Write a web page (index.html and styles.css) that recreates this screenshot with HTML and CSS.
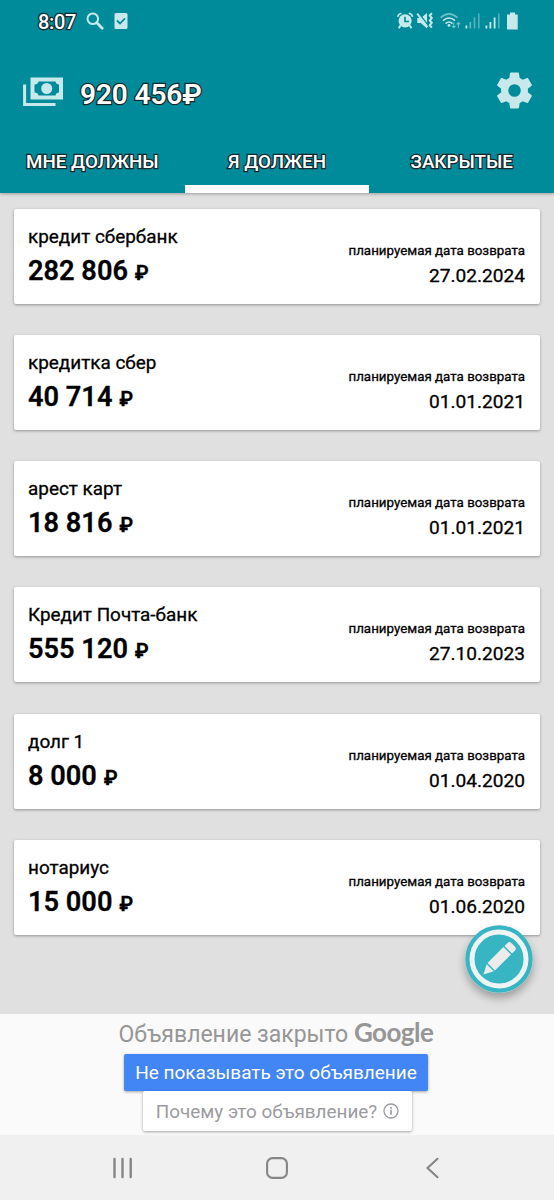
FILE: index.html
```html
<!DOCTYPE html>
<html lang="ru">

<head>
    <meta charset="UTF-8">
    <title>Долги</title>
    <link rel="stylesheet" href="styles.css">
</head>

<body>

    <header class="header">
        <!-- Строка состояния -->
        <div class="status-bar">
            <span class="clock outlined">8:07</span>
            <svg class="icon-search" width="18" height="18" viewBox="0 0 18 18">
                <circle cx="6.8" cy="6.8" r="5.3" fill="none" stroke="currentColor" stroke-width="2"/>
                <path d="M10.8 10.8L16.2 16.2" stroke="currentColor" stroke-width="2.8" stroke-linecap="round"/>
            </svg>
            <svg class="icon-task" width="14" height="16" viewBox="0 0 14 16">
                <rect x="0.5" width="13" height="16" rx="1.5" fill="currentColor"/>
                <path d="M3 7.5l3 3 5-5.2" fill="none" stroke="#008b9b" stroke-width="1.8"/>
            </svg>
            <svg class="status-icons" width="122" height="18" viewBox="0 0 122 18">
                <!-- будильник -->
                <g fill="none" stroke="currentColor">
                    <path d="M0.6 4.8Q1.2 2 4.4 1.3M11.8 1.3Q15 2 15.6 4.8" stroke-width="1.6"/>
                    <path d="M3.6 13.2L1.8 16.2M12.6 13.2L14.4 16.2" stroke-width="2"/>
                </g>
                <circle cx="8.1" cy="8.8" r="6.6" fill="currentColor"/>
                <path d="M8 4.8V9.5H12" fill="none" stroke="#008b9b" stroke-width="1.6"/>
                <!-- звук выключен -->
                <path d="M20.3 6h3.5L30 1v15.5l-6.2-5.5h-3.5z" fill="currentColor"/>
                <path d="M21.4 0.8L32 14.4" stroke="#008b9b" stroke-width="1.4"/>
                <path d="M20.2 1.6L30.5 15" stroke="currentColor" stroke-width="1.8"/>
                <path d="M34.8 1.2l-2 2.4 2 2.4-2 2.4 2 2.4-2 2.4 2 2.4" fill="none" stroke="currentColor" stroke-width="2"/>
                <!-- wi-fi -->
                <g fill="none" stroke="currentColor" stroke-width="1.6">
                    <path d="M43.6 5.6Q52 -2 60.4 5.6" opacity="0.55"/>
                    <path d="M46 8.7Q52 3.3 58 8.7M48.5 11.6Q52 8.4 55.5 11.6"/>
                </g>
                <circle cx="52" cy="13.4" r="1.4" fill="currentColor"/>
                <path d="M56.8 10.5v5M55 13.8l1.8 1.8 1.8-1.8M61.4 15.8v-5M59.6 12.4l1.8-1.8 1.8 1.8" fill="none" stroke="currentColor" stroke-width="1.1" opacity="0.6"/>
                <!-- две sim-карты -->
                <g fill="currentColor">
                    <rect x="68.5" y="13.5" width="1.8" height="3"/>
                    <rect x="72.5" y="10" width="1.6" height="6.5" opacity="0.5"/>
                    <rect x="76.7" y="5.5" width="1.6" height="11" opacity="0.45"/>
                    <rect x="81" y="1.5" width="1.6" height="15" opacity="0.4"/>
                    <rect x="88.5" y="13.5" width="1.8" height="3"/>
                    <rect x="92.5" y="10" width="1.8" height="6.5"/>
                    <rect x="96.7" y="5.5" width="1.8" height="11"/>
                    <rect x="101" y="1.5" width="1.6" height="15" opacity="0.4"/>
                    <path d="M113 0.5h5v2h2.7v15h-10.7v-15h3z"/>
                </g>
            </svg>
        </div>

        <!-- Общая сумма -->
        <div class="toolbar">
            <svg class="icon-cash" width="40" height="30" viewBox="0 0 40 30">
                <path d="M1.6 7.5V27.4H32.5" fill="none" stroke="currentColor" stroke-width="3"/>
                <rect x="7.5" y="0.5" width="32.5" height="22" fill="currentColor"/>
                <path d="M15.5 4.5h17q0.5 3 3.5 3v8q-3 0-3.5 3h-17q-0.5-3-4-3v-8q3.5 0 4-3z" fill="#008b9b"/>
                <circle cx="23.7" cy="11.5" r="5.5" fill="currentColor"/>
            </svg>
            <span class="total outlined">920 456₽</span>
            <svg class="icon-gear" width="43" height="43" viewBox="0 0 24 24">
                <path fill="currentColor" d="M12 15.5A3.5 3.5 0 1 1 12 8.5a3.5 3.5 0 0 1 0 7m7.43-2.53c.04-.32.07-.64.07-.97s-.03-.66-.07-1l2.11-1.63c.19-.15.24-.42.12-.64l-2-3.46c-.12-.22-.39-.31-.61-.22l-2.49 1c-.52-.39-1.06-.73-1.69-.98l-.37-2.65A.506.506 0 0 0 14 2h-4c-.25 0-.46.18-.5.42l-.37 2.65c-.63.25-1.17.59-1.69.98l-2.49-1c-.22-.09-.49 0-.61.22l-2 3.46c-.13.22-.07.49.12.64L4.57 11c-.04.34-.07.67-.07 1s.03.65.07.97l-2.11 1.66c-.19.15-.25.42-.12.64l2 3.46c.12.22.39.3.61.22l2.49-1.01c.52.4 1.06.74 1.69.99l.37 2.65c.04.24.25.42.5.42h4c.25 0 .46-.18.5-.42l.37-2.65c.63-.26 1.17-.59 1.69-.99l2.49 1.01c.22.08.49 0 .61-.22l2-3.46c.12-.22.07-.49-.12-.64z"/>
            </svg>
        </div>

        <nav class="tabs">
            <div class="tab outlined">МНЕ ДОЛЖНЫ</div>
            <div class="tab outlined active">Я ДОЛЖЕН</div>
            <div class="tab outlined">ЗАКРЫТЫЕ</div>
        </nav>
    </header>

    <!-- Список долгов -->
    <main class="list">
        <div class="card">
            <div class="debt">
                <div class="name">кредит сбербанк</div>
                <div class="amount">282 806 <span class="currency">₽</span></div>
            </div>
            <div class="return">
                <div class="label">планируемая дата возврата</div>
                <div class="date">27.02.2024</div>
            </div>
        </div>
        <div class="card">
            <div class="debt">
                <div class="name">кредитка сбер</div>
                <div class="amount">40 714 <span class="currency">₽</span></div>
            </div>
            <div class="return">
                <div class="label">планируемая дата возврата</div>
                <div class="date">01.01.2021</div>
            </div>
        </div>
        <div class="card">
            <div class="debt">
                <div class="name">арест карт</div>
                <div class="amount">18 816 <span class="currency">₽</span></div>
            </div>
            <div class="return">
                <div class="label">планируемая дата возврата</div>
                <div class="date">01.01.2021</div>
            </div>
        </div>
        <div class="card">
            <div class="debt">
                <div class="name">Кредит Почта-банк</div>
                <div class="amount">555 120 <span class="currency">₽</span></div>
            </div>
            <div class="return">
                <div class="label">планируемая дата возврата</div>
                <div class="date">27.10.2023</div>
            </div>
        </div>
        <div class="card">
            <div class="debt">
                <div class="name">долг 1</div>
                <div class="amount">8 000 <span class="currency">₽</span></div>
            </div>
            <div class="return">
                <div class="label">планируемая дата возврата</div>
                <div class="date">01.04.2020</div>
            </div>
        </div>
        <div class="card">
            <div class="debt">
                <div class="name">нотариус</div>
                <div class="amount">15 000 <span class="currency">₽</span></div>
            </div>
            <div class="return">
                <div class="label">планируемая дата возврата</div>
                <div class="date">01.06.2020</div>
            </div>
        </div>

        <!-- Кнопка добавления -->
        <div class="fab">
            <svg width="68" height="68" viewBox="0 0 68 68">
                <circle cx="34" cy="34" r="33.7" fill="#37b5c3"/>
                <circle cx="34" cy="34" r="27" fill="none" stroke="#eef3f4" stroke-width="5"/>
                <g fill="#ececec" transform="translate(18.5 49.5) rotate(-45)">
                    <path d="M0 0L9.5 -5V5z"/>
                    <rect x="11" y="-5.3" width="22.5" height="10.6"/>
                    <path d="M35 -5.3h4q3 0 3 3v4.600q0 3-3 3h-4z"/>
                </g>
            </svg>
        </div>
    </main>

    <!-- Реклама -->
    <section class="ad">
        <div class="ad-title">Объявление закрыто <span class="google">Google</span></div>
        <div class="ad-hide">Не показывать это объявление</div>
        <div class="ad-why">
            <span>Почему это объявление?</span>
            <svg width="16" height="16" viewBox="0 0 16 16">
                <circle cx="8" cy="8" r="7" fill="none" stroke="currentColor" stroke-width="1.3"/>
                <path d="M8 6.8v5M8 4v1.8" stroke="currentColor" stroke-width="1.7"/>
            </svg>
        </div>
    </section>

    <!-- Навигация телефона -->
    <footer class="nav-bar">
        <svg width="22" height="22" viewBox="0 0 22 22">
            <path d="M3.5 2v18M11.5 2v18M19.7 2v18" stroke="currentColor" stroke-width="2.4" stroke-linecap="round"/>
        </svg>
        <svg width="22" height="22" viewBox="0 0 22 22">
            <rect x="1.1" y="1.1" width="19.8" height="19.8" rx="5.5" fill="none" stroke="currentColor" stroke-width="2.1"/>
        </svg>
        <svg width="22" height="22" viewBox="0 0 22 22">
            <path d="M16.5 1.8L6.5 11l10 9.2" fill="none" stroke="currentColor" stroke-width="2.1" stroke-linecap="round"/>
        </svg>
    </footer>

</body>

</html>
```
FILE: styles.css
```css
body {
    margin: 0;
    width: 554px;
    height: 1200px;
    display: flex;
    flex-direction: column;
    font-family: Roboto, sans-serif;
    background-color: #e0e0e0;
    color: #000;
    overflow: hidden;
}

svg {
    display: block;
    flex: none;
}

.header {
    height: 193px;
    background-color: #008b9b;
    color: #c8e9ec;
    box-shadow: 0 1px 3px rgba(0, 0, 0, 0.3);
}

.outlined {
    color: #fff;
    -webkit-text-stroke: 2.5px #15292c;
    paint-order: stroke fill;
}

.status-bar {
    height: 42px;
    padding: 0 35px 0 38px;
    display: flex;
    align-items: center;
}

.clock {
    font-size: 20px;
    font-weight: 500;
    letter-spacing: -0.3px;
    padding-top: 1px;
    width: 48px;
}

.icon-task {
    margin-left: 10px;
}

.status-icons {
    margin-left: auto;
}

.toolbar {
    height: 97px;
    padding: 0 18px 0 23px;
    display: flex;
    align-items: center;
}

.icon-cash {
    margin-top: 3px;
}

.total {
    margin-left: 17px;
    padding-top: 7px;
    font-size: 28px;
    font-weight: 600;
    letter-spacing: -0.1px;
}

.icon-gear {
    margin-left: auto;
}

.tabs {
    height: 54px;
    display: flex;
}

.tab {
    flex: 1;
    line-height: 46px;
    box-sizing: border-box;
    text-align: center;
    font-size: 18.8px;
    font-weight: 500;
    white-space: nowrap;
}

.tab.active {
    border-bottom: 8px solid #fff;
}

.list {
    position: relative;
    flex: none;
    height: 821px;
    box-sizing: border-box;
    padding: 16px 14px 0;
    display: flex;
    flex-direction: column;
    gap: 31.15px;
}

.card {
    height: 95px;
    box-sizing: border-box;
    padding: 15px 15px 0 14px;
    display: flex;
    justify-content: space-between;
    background-color: #fff;
    border-radius: 2px;
    box-shadow: 0 1px 3px rgba(0, 0, 0, 0.35);
    -webkit-text-stroke: 0.3px #000;
}

.name {
    font-size: 18.9px;
    line-height: 26px;
}

.amount {
    font-size: 27.2px;
    line-height: 43px;
    font-weight: 600;
}

.currency {
    font-size: 20px;
}

.return {
    padding-top: 16px;
    text-align: right;
}

.label {
    font-size: 13.35px;
    line-height: 22px;
}

.date {
    font-size: 19.1px;
    line-height: 27px;
}

.fab {
    position: absolute;
    right: 21px;
    bottom: 21px;
    border-radius: 50%;
    box-shadow: 0 5px 9px rgba(0, 0, 0, 0.3);
}

.ad {
    height: 121px;
    flex: none;
    padding-right: 2px;
    background-color: #fafafa;
    display: flex;
    flex-direction: column;
    align-items: center;
}

.ad-title {
    height: 40px;
    line-height: 41px;
    font-size: 23px;
    color: #969696;
    white-space: nowrap;
}

.google {
    font-family: Lato, sans-serif;
    font-weight: 700;
    font-size: 26px;
    letter-spacing: -0.5px;
    line-height: 30px;
}

.ad-hide {
    width: 304px;
    height: 37px;
    line-height: 37px;
    text-align: center;
    font-size: 19px;
    color: #fff;
    background-color: #4285f4;
    border-radius: 2px;
    box-shadow: 0 1px 3px rgba(0, 0, 0, 0.35);
    white-space: nowrap;
}

.ad-why {
    width: 269px;
    margin-left: 3px;
    height: 40px;
    display: flex;
    align-items: center;
    justify-content: center;
    gap: 6px;
    font-size: 18.9px;
    color: #9b9ba0;
    background-color: #fff;
    border-radius: 2px;
    box-shadow: 0 1px 3px rgba(0, 0, 0, 0.35);
    white-space: nowrap;
}

.nav-bar {
    flex: 1;
    padding: 0 111px;
    display: flex;
    align-items: center;
    justify-content: space-between;
    background-color: #f0f0f0;
    color: #858585;
}
```
